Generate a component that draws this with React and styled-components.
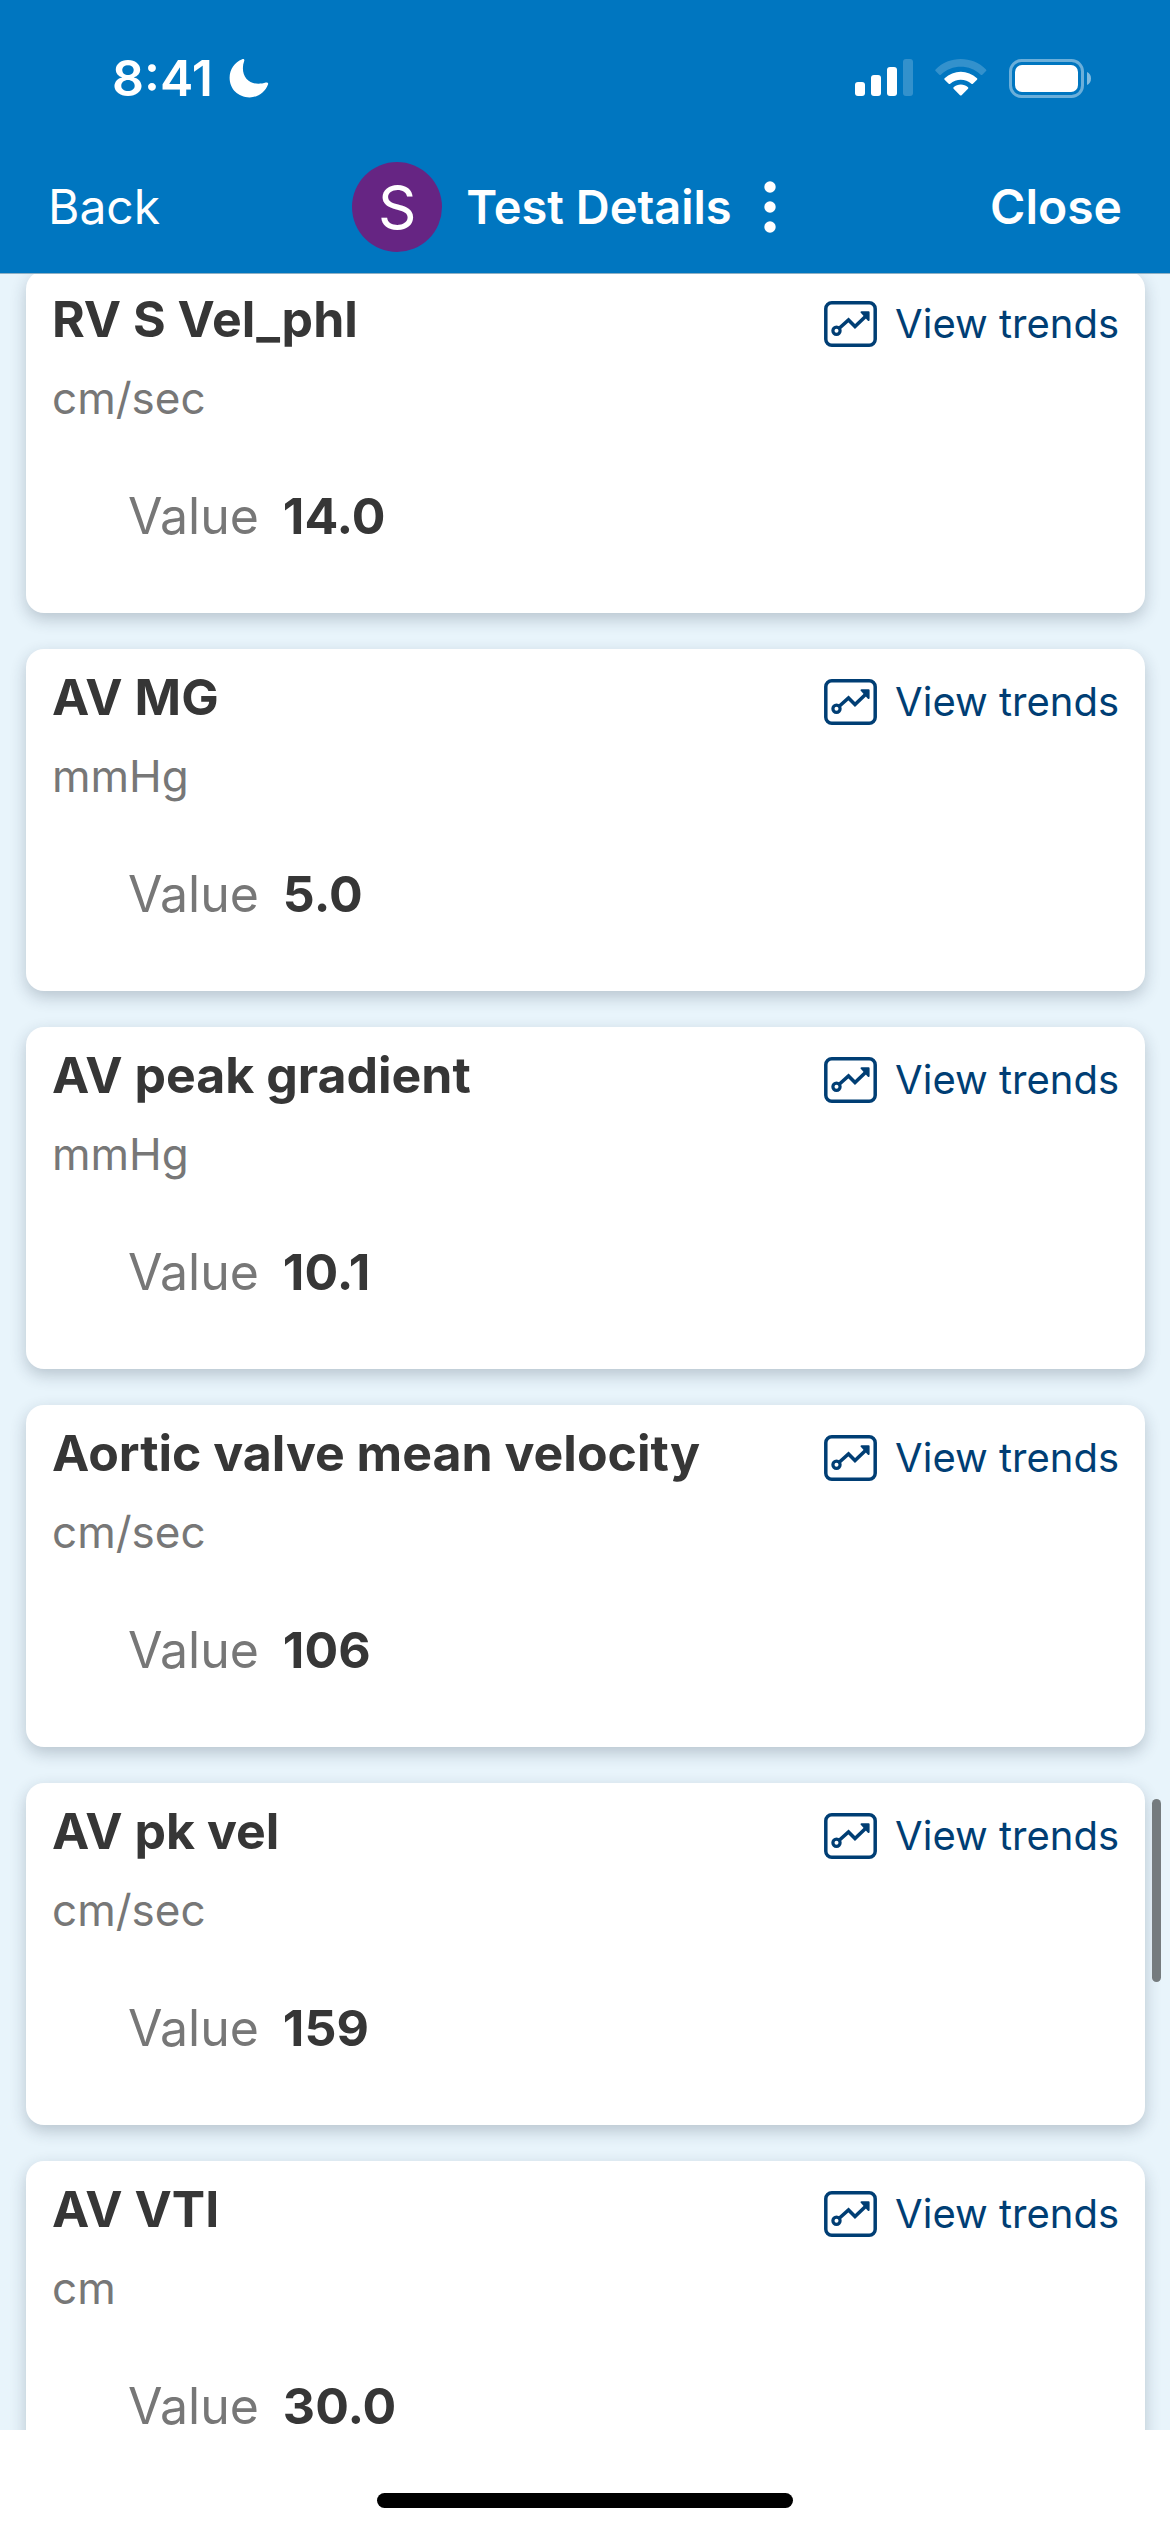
import React from 'react';
import styled, { createGlobalStyle } from 'styled-components';

const results = [
  { name: 'RV S Vel_phl', unit: 'cm/sec', value: '14.0' },
  { name: 'AV MG', unit: 'mmHg', value: '5.0' },
  { name: 'AV peak gradient', unit: 'mmHg', value: '10.1' },
  { name: 'Aortic valve mean velocity', unit: 'cm/sec', value: '106' },
  { name: 'AV pk vel', unit: 'cm/sec', value: '159' },
  { name: 'AV VTI', unit: 'cm', value: '30.0' },
];

function MoonIcon() {
  return (
    <svg width="40" height="40" viewBox="0 0 40 40" aria-hidden="true">
      <path
        d="M13.2 1.2C14.6 .6 15.8 1.6 15.2 3.1C14.3 5.4 13.9 7.8 13.9 10.3C13.9 19.6 20 25.8 29.4 25.8C32 25.8 34.6 25.4 36.7 24.6C38.4 24 39.6 25 39 26.6C36.1 34.4 29 39.4 20.6 39.4C9.2 39.4 .6 31 .6 19.8C.6 11.4 5.6 4.2 13.2 1.2Z"
        fill="#fff"
      />
    </svg>
  );
}

function SignalIcon() {
  return (
    <svg width="58" height="38" viewBox="0 0 58 38" fill="#fff" aria-hidden="true">
      <rect x="0" y="23" width="10" height="14" rx="3" />
      <rect x="16" y="16" width="10" height="21" rx="3" />
      <rect x="32" y="8" width="10" height="29" rx="3" />
      <rect x="48" y="0" width="10" height="37" rx="3" opacity="0.2" />
    </svg>
  );
}

function WifiIcon() {
  return (
    <svg width="52" height="38" viewBox="0 0 52 38" fill="#fff" aria-hidden="true">
      <path
        d="M.6 10.4C14.4 -3.4 37.2 -3.4 51 10.4C51.5 10.9 51.5 11.5 51 12L47.3 15.7C46.8 16.2 46.2 16.2 45.7 15.7C34.7 5.2 16.9 5.2 5.9 15.7C5.4 16.2 4.8 16.2 4.3 15.7L.6 12C.1 11.5 .1 10.9 .6 10.4Z"
        opacity="0.2"
      />
      <path d="M9.6 19.3C18.7 10.6 32.9 10.6 42 19.3C42.5 19.8 42.5 20.3 42 20.8L37.9 24.7C37.4 25.2 36.9 25.2 36.4 24.7C30.5 19.5 21.1 19.5 15.2 24.7C14.7 25.2 14.2 25.2 13.7 24.7L9.6 20.8C9.1 20.3 9.1 19.8 9.6 19.3Z" />
      <path d="M18.6 28.2C22.7 24.7 28.9 24.7 33 28.2C33.5 28.7 33.5 29.2 33 29.7L26.6 36.2C26.1 36.7 25.5 36.7 25 36.2L18.6 29.7C18.1 29.2 18.1 28.7 18.6 28.2Z" />
    </svg>
  );
}

function BatteryIcon() {
  return (
    <svg width="82" height="39" viewBox="0 0 82 39" aria-hidden="true">
      <rect x="1.5" y="1.5" width="72" height="36" rx="11" fill="none" stroke="#fff" strokeWidth="3" opacity="0.42" />
      <rect x="6" y="6" width="63" height="27" rx="7" fill="#fff" />
      <path d="M78 13C80.5 14 82 16.5 82 19.5C82 22.5 80.5 25 78 26Z" fill="#fff" opacity="0.5" />
    </svg>
  );
}

function DotsIcon() {
  return (
    <svg width="12" height="52" viewBox="0 0 12 52" fill="#fff" aria-hidden="true">
      <circle cx="6" cy="6" r="5.7" />
      <circle cx="6" cy="26" r="5.7" />
      <circle cx="6" cy="46" r="5.7" />
    </svg>
  );
}

function TrendIcon() {
  return (
    <svg width="53" height="46" viewBox="0 0 53 46" fill="none" stroke="#003e74" aria-hidden="true">
      <rect x="1.8" y="1.8" width="49.4" height="42.4" rx="6" strokeWidth="3.5" />
      <circle cx="12.5" cy="29.8" r="3.6" strokeWidth="3.2" />
      <path d="M15.5 27L24.5 19L31 25.5L42 15" strokeWidth="3.6" />
      <path d="M37.5 11.2H44.6V19Z" fill="#003e74" strokeWidth="2" strokeLinejoin="round" />
    </svg>
  );
}

function ResultCard({ name, unit, value }) {
  return (
    <Card>
      <CardTop>
        <div>
          <Name>{name}</Name>
          <Unit>{unit}</Unit>
        </div>
        <TrendsLink href="#trends" aria-label={`View trends for ${name}`}>
          <TrendIcon />
          View trends
        </TrendsLink>
      </CardTop>
      <ValueRow>
        <dt>Value</dt>
        <dd>{value}</dd>
      </ValueRow>
    </Card>
  );
}

function App() {
  return (
    <>
      <GlobalStyle />
      <Screen>
        <Header>
          <StatusBar>
            <Clock>
              8:41
              <MoonIcon />
            </Clock>
            <StatusIcons>
              <SignalIcon />
              <WifiIcon />
              <BatteryIcon />
            </StatusIcons>
          </StatusBar>
          <NavBar>
            <NavButton type="button">Back</NavButton>
            <TitleGroup>
              <Avatar>S</Avatar>
              <h1>Test Details</h1>
              <MenuButton type="button" aria-label="More options">
                <DotsIcon />
              </MenuButton>
            </TitleGroup>
            <NavButton type="button" $bold $end>Close</NavButton>
          </NavBar>
        </Header>

        <Content>
          <List>
            {results.map((result) => (
              <ResultCard key={result.name} {...result} />
            ))}
          </List>
          <ScrollThumb />
        </Content>

        <Footer>
          <HomeBar />
        </Footer>
      </Screen>
    </>
  );
}

export default App;

const GlobalStyle = createGlobalStyle`
  * {
    box-sizing: border-box;
  }

  body {
    margin: 0;
    background: #fff;
    font-family: Inter, "Liberation Sans", sans-serif;
  }

  h1, h2, p, dl, dd {
    margin: 0;
  }

  button {
    font-family: inherit;
    background: none;
    border: none;
    padding: 0;
    color: inherit;
    cursor: pointer;
  }

  svg {
    display: block;
    flex-shrink: 0;
  }
`;

const Screen = styled.div`
  display: flex;
  flex-direction: column;
  height: 100vh;
`;

const Header = styled.header`
  flex-shrink: 0;
  background: #0076c0;
  color: #fff;
  border-bottom: 1px solid #8fb0c4;
  padding-bottom: 15px;
`;

const StatusBar = styled.div`
  display: flex;
  justify-content: space-between;
  align-items: center;
  height: 156px;
  padding: 0 79px 0 112px;
`;

const Clock = styled.div`
  display: flex;
  align-items: center;
  gap: 16px;
  font-size: 50px;
  font-weight: 600;
  line-height: 60px;
`;

const StatusIcons = styled.div`
  display: flex;
  align-items: center;
  gap: 22px;
`;

const NavBar = styled.nav`
  display: grid;
  grid-template-columns: 1fr auto 1fr;
  align-items: center;
  height: 102px;
  padding: 0 48px;
`;

const NavButton = styled.button`
  justify-self: ${(props) => (props.$end ? 'end' : 'start')};
  font-size: 48px;
  font-weight: ${(props) => (props.$bold ? 600 : 400)};
  line-height: 60px;
`;

const TitleGroup = styled.div`
  display: flex;
  align-items: center;

  h1 {
    margin-left: 24px;
    font-size: 47px;
    font-weight: 600;
    line-height: 60px;
  }
`;

const Avatar = styled.div`
  display: grid;
  place-items: center;
  width: 90px;
  height: 90px;
  border-radius: 50%;
  background: #662583;
  font-size: 60px;
  line-height: 60px;
`;

const MenuButton = styled.button`
  padding: 0 42px 0 32px;
`;

const Content = styled.main`
  position: relative;
  flex: 1;
  min-height: 0;
  overflow: hidden;
  background: #e8f4fb;
`;

const List = styled.div`
  display: flex;
  flex-direction: column;
  gap: 36px;
  margin-top: -3px;
  padding: 0 25px 0 26px;
`;

const Card = styled.section`
  padding: 18px 26px 73px;
  border-radius: 18px;
  background: #fff;
  box-shadow: 0 6px 16px rgba(30, 45, 65, 0.24);
`;

const CardTop = styled.div`
  display: flex;
  justify-content: space-between;
  align-items: flex-start;
`;

const Name = styled.h2`
  color: #363636;
  font-size: 50px;
  font-weight: 700;
  line-height: 60px;
`;

const Unit = styled.p`
  margin-top: 21px;
  color: #777;
  font-size: 44px;
  line-height: 56px;
`;

const TrendsLink = styled.a`
  display: flex;
  align-items: center;
  gap: 18px;
  margin-top: 11px;
  color: #003e74;
  font-size: 40px;
  line-height: 48px;
  text-decoration: none;
  white-space: nowrap;
`;

const ValueRow = styled.dl`
  display: flex;
  gap: 24px;
  margin-top: 66px;
  padding-left: 76px;
  font-size: 50px;
  line-height: 48px;

  dt {
    color: #777;
  }

  dd {
    color: #363636;
    font-weight: 700;
  }
`;

/* floats over the right edge of the list */
const ScrollThumb = styled.div`
  position: absolute;
  right: 9px;
  bottom: 448px;
  width: 9px;
  height: 183px;
  border-radius: 5px;
  background: #757b7e;
`;

const Footer = styled.footer`
  display: flex;
  flex-shrink: 0;
  justify-content: center;
  align-items: flex-end;
  height: 102px;
  padding-bottom: 24px;
  background: #fff;
`;

const HomeBar = styled.div`
  width: 416px;
  height: 15px;
  border-radius: 8px;
  background: #000;
`;
